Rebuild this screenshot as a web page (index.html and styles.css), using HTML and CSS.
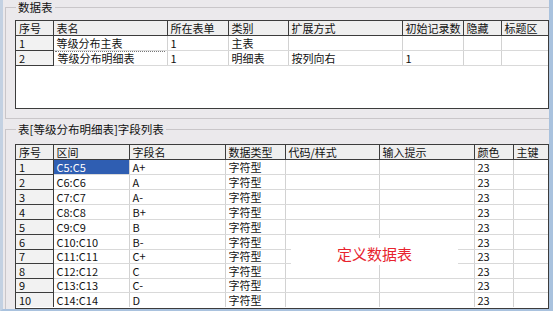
FILE: index.html
```html
<!DOCTYPE html>
<html lang="zh-CN">
<head>
    <meta charset="UTF-8">
    <meta name="viewport" content="width=device-width, initial-scale=1.0">
    <title>定义数据表</title>
    <link rel="stylesheet" href="styles.css">
</head>
<body>
    <div class="window">
        <fieldset class="group first">
            <legend>数据表</legend>
            <div class="grid top">
                <table>
                    <colgroup>
                        <col style="width:37px"><col style="width:114px"><col style="width:61px"><col style="width:60px">
                        <col style="width:114px"><col style="width:61px"><col style="width:38px"><col style="width:47px">
                    </colgroup>
                    <tr class="head">
                        <th>序号</th><th>表名</th><th>所在表单</th><th>类别</th><th>扩展方式</th><th>初始记录数</th><th>隐藏</th><th>标题区</th>
                    </tr>
                    <tr>
                        <td class="idx">1</td><td>等级分布主表</td><td>1</td><td>主表</td><td></td><td></td><td></td><td></td>
                    </tr>
                    <tr>
                        <td class="idx">2</td><td class="editing"><span class="editor">等级分布明细表</span></td><td>1</td><td>明细表</td><td>按列向右</td><td>1</td><td></td><td></td>
                    </tr>
                </table>
            </div>
        </fieldset>

        <fieldset class="group second">
            <legend>表[等级分布明细表]字段列表</legend>
            <div class="grid fields">
                <table>
                    <colgroup>
                        <col style="width:37px"><col style="width:76px"><col style="width:96px"><col style="width:60px">
                        <col style="width:94px"><col style="width:95px"><col style="width:39px"><col style="width:35px">
                    </colgroup>
                    <tr class="head">
                        <th>序号</th><th>区间</th><th>字段名</th><th>数据类型</th><th>代码/样式</th><th>输入提示</th><th>颜色</th><th>主键</th>
                    </tr>
                    <tr><td class="idx">1</td><td class="selected">C5:C5</td><td>A+</td><td>字符型</td><td></td><td></td><td>23</td><td></td></tr>
                    <tr><td class="idx">2</td><td>C6:C6</td><td>A</td><td>字符型</td><td></td><td></td><td>23</td><td></td></tr>
                    <tr><td class="idx">3</td><td>C7:C7</td><td>A-</td><td>字符型</td><td></td><td></td><td>23</td><td></td></tr>
                    <tr><td class="idx">4</td><td>C8:C8</td><td>B+</td><td>字符型</td><td></td><td></td><td>23</td><td></td></tr>
                    <tr><td class="idx">5</td><td>C9:C9</td><td>B</td><td>字符型</td><td></td><td></td><td>23</td><td></td></tr>
                    <tr><td class="idx">6</td><td>C10:C10</td><td>B-</td><td>字符型</td><td></td><td></td><td>23</td><td></td></tr>
                    <tr class="short"><td class="idx">7</td><td>C11:C11</td><td>C+</td><td>字符型</td><td></td><td></td><td>23</td><td></td></tr>
                    <tr><td class="idx">8</td><td>C12:C12</td><td>C</td><td>字符型</td><td></td><td></td><td>23</td><td></td></tr>
                    <tr class="short"><td class="idx">9</td><td>C13:C13</td><td>C-</td><td>字符型</td><td></td><td></td><td>23</td><td></td></tr>
                    <tr><td class="idx">10</td><td>C14:C14</td><td>D</td><td>字符型</td><td></td><td></td><td>23</td><td></td></tr>
                </table>
                <div class="note">定义数据表</div>
            </div>
        </fieldset>
    </div>
</body>
</html>
```

FILE: styles.css
```css
body {
    margin: 0;
    padding: 0;
    font-family: "Noto Sans CJK SC", sans-serif;
    font-size: 11px;
    color: #111;
    background-color: #ebe9ec;
}
.window {
    width: 553px;
    height: 311px;
    box-sizing: border-box;
    border-left: 3px solid #c3d1e2;
    border-right: 4px solid #a9c2de;
    border-bottom: 2px solid #a9c2de;
    padding-left: 2px;
    background: #ebe9ec;
    overflow: hidden;
}
.group {
    margin: 0;
    border: 1px solid #c9c6c9;
    border-right: none;
    padding: 6px 0 9px 9px;
    min-inline-size: 0;
}
.group legend {
    padding: 0 2px;
    margin-left: 1px;
    height: 14px;
    line-height: 14px;
    font-size: 11.5px;
    color: #111;
}
.group.second {
    margin-top: 3px;
    padding-top: 8px;
    padding-bottom: 0;
    border-bottom: none;
}
.grid {
    position: relative;
    background: #fff;
    border: 1px solid #3c3c3c;
    box-sizing: border-box;
    width: 534px;
}
.grid.top {
    height: 89px;
}
.grid.fields {
    height: 165px;
}
.grid table {
    border-collapse: collapse;
    table-layout: fixed;
    width: 532px;
}
.grid th,
.grid td {
    height: 14px;
    padding: 0 3px;
    line-height: 13px;
    text-align: left;
    font-weight: normal;
    white-space: nowrap;
    overflow: hidden;
    vertical-align: middle;
}
.grid th {
    background: #efefef;
    border-right: 1px solid #3c3c3c;
    border-bottom: 1px solid #3c3c3c;
    color: #111;
}
.grid td {
    border-right: 1px solid #d2d2d2;
    border-bottom: 1px solid #d9d9d9;
}
.grid tr.short td {
    height: 13px;
}
.grid td.idx {
    background: #f2f2f2;
    border-right: 1px solid #3c3c3c;
    border-bottom: 1px solid #3c3c3c;
}
.grid tr > :last-child {
    border-right: none;
}
.grid.fields tr:last-child td {
    border-bottom: none;
}
.grid td.selected {
    background: #2f5eb2;
    color: #fff;
}
.grid td.editing {
    padding: 0 2px 0 1px;
}
.editor {
    display: block;
    border-top: 1px dotted #777;
    padding-left: 3px;
    line-height: 13px;
}
.note {
    position: absolute;
    left: 275px;
    top: 93px;
    width: 167px;
    height: 27px;
    box-sizing: border-box;
    padding-top: 3px;
    background: #fff;
    color: #e8232e;
    font-size: 15px;
    display: flex;
    align-items: center;
    justify-content: center;
}
```
